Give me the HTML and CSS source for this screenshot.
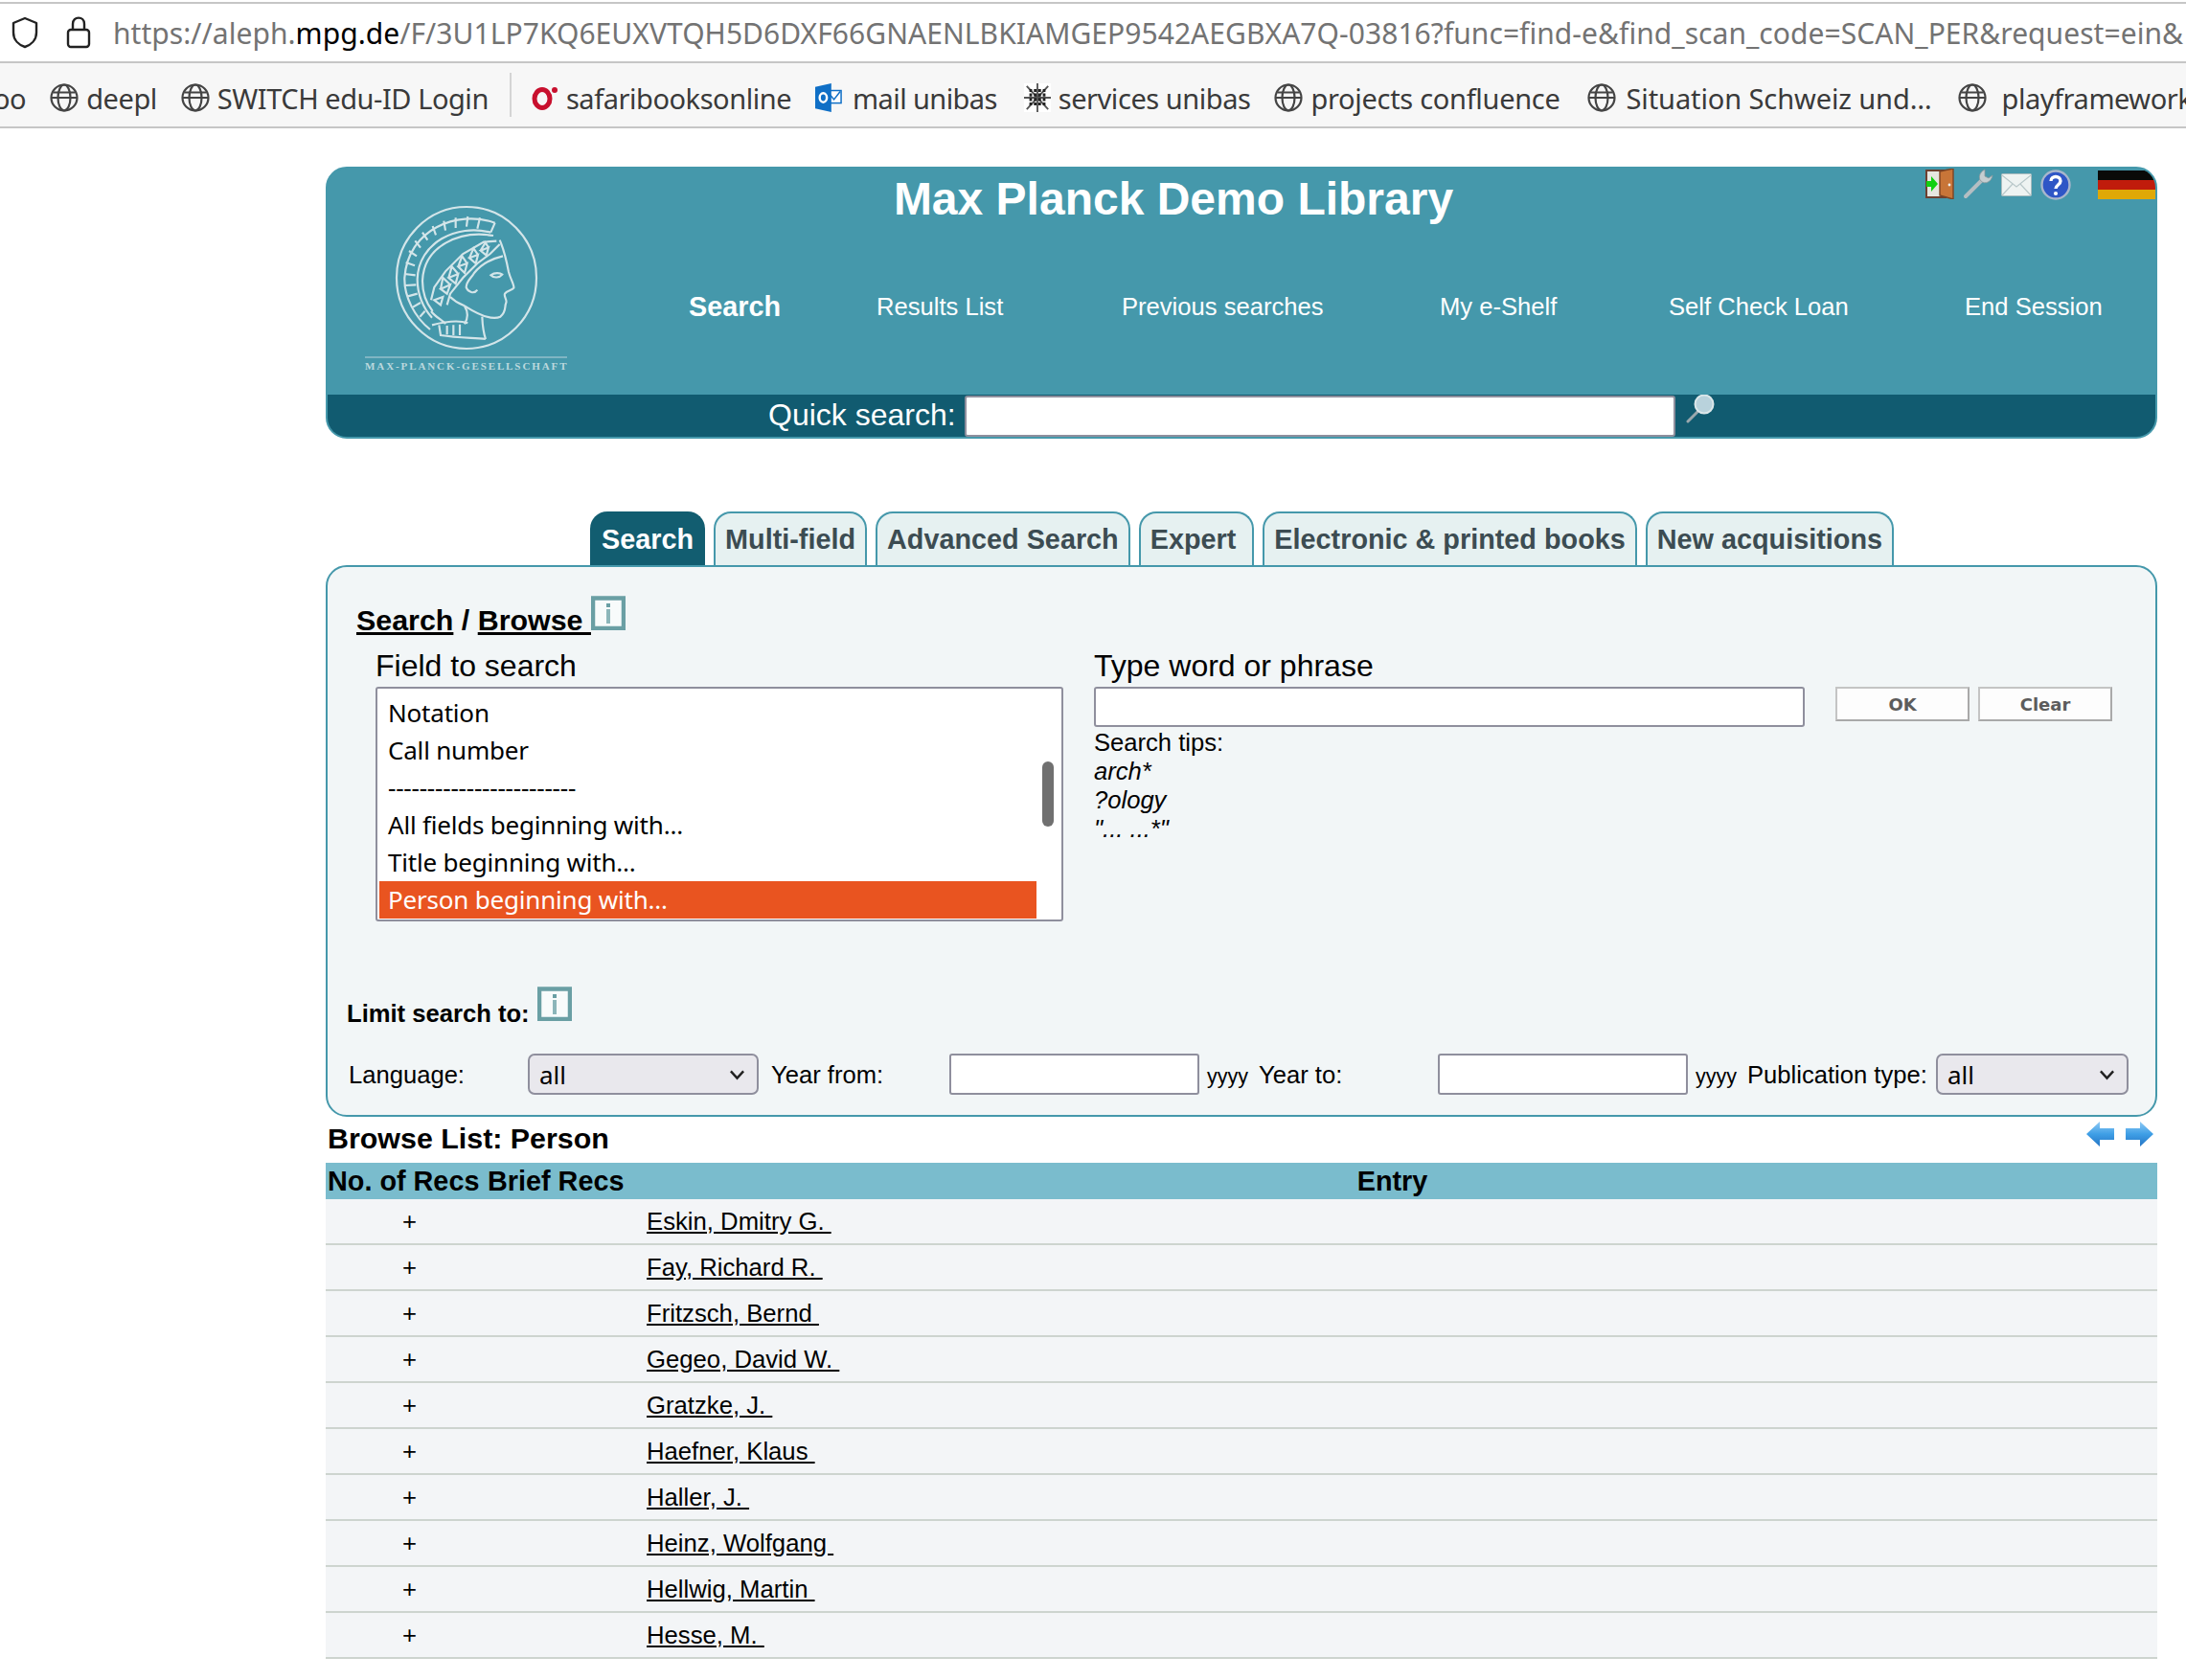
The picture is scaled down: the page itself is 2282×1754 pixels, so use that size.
FILE: index.html
```html
<!DOCTYPE html>
<html lang="en">
<head>
    <meta charset="UTF-8">
    <meta name="viewport" content="width=device-width, initial-scale=1.0">
    <title>Max Planck Demo Library</title>
    <link rel="stylesheet" href="styles.css">
</head>
<body>
    <div class="url-bar">
        <svg class="shield" viewBox="0 0 28 34"><path d="M14 2 L26 7 V17 C26 25 20 30 14 32 C8 30 2 25 2 17 V7 Z" fill="none" stroke="#222" stroke-width="2.4" stroke-linejoin="round"/></svg>
        <svg class="lock" viewBox="0 0 26 34"><rect x="2" y="14" width="22" height="18" rx="3" fill="none" stroke="#222" stroke-width="2.4"/><path d="M7 14 V8 C7 -0.5 19 -0.5 19 8 V14" fill="none" stroke="#222" stroke-width="2.4"/></svg>
        <span class="url">https://aleph.<b>mpg.de</b>/F/3U1LP7KQ6EUXVTQH5D6DXF66GNAENLBKIAMGEP9542AEGBXA7Q-03816?func=find-e&amp;find_scan_code=SCAN_PER&amp;request=ein&amp;</span>
    </div>
    <div class="bookmarks">
        <span class="bm-text bm-cut">oo</span>
        <span class="bm"><svg class="globe" viewBox="0 0 30 30"><use href="#globe"/></svg>deepl</span>
        <span class="bm"><svg class="globe" viewBox="0 0 30 30"><use href="#globe"/></svg>SWITCH edu-ID Login</span>
        <span class="bm-sep"></span>
        <span class="bm"><svg class="fav" viewBox="0 0 28 28"><ellipse cx="11" cy="15" rx="8" ry="9.5" fill="none" stroke="#c8102e" stroke-width="5"/><circle cx="24" cy="6" r="3" fill="#c8102e"/></svg>safaribooksonline</span>
        <span class="bm bm-mail"><svg class="fav" viewBox="0 0 30 32"><rect x="14" y="8" width="15" height="14" fill="#fff" stroke="#0f6fc6" stroke-width="1.6"/><path d="M16 12 L21 18 L28 9" fill="none" stroke="#0f6fc6" stroke-width="1.6"/><path d="M0 4 L18 0 V32 L0 28 Z" fill="#0f6fc6"/><ellipse cx="9" cy="16" rx="4" ry="5" fill="none" stroke="#fff" stroke-width="2.6"/></svg>mail unibas</span>
        <span class="bm bm-srv"><svg class="fav" viewBox="0 0 30 32"><rect width="30" height="32" fill="#fff"/><g stroke="#555" stroke-width="2"><path d="M15 0 V32 M0 16 H30 M3 3 L27 29 M27 3 L3 29"/></g><g stroke="#222" stroke-width="3.4" stroke-dasharray="3 2"><path d="M6 8 H24 M6 13 H24 M6 18 H24 M6 23 H24"/></g></svg>services unibas</span>
        <span class="bm bm-prj"><svg class="globe" viewBox="0 0 30 30"><use href="#globe"/></svg>projects confluence</span>
        <span class="bm bm-sit"><svg class="globe" viewBox="0 0 30 30"><use href="#globe"/></svg>Situation Schweiz und…</span>
        <span class="bm bm-last"><svg class="globe" viewBox="0 0 30 30"><use href="#globe"/></svg>playframework</span>
        <svg class="defs" width="0" height="0"><defs><g id="globe" fill="none" stroke="#444" stroke-width="2.2"><circle cx="15" cy="15" r="13.5"/><ellipse cx="15" cy="15" rx="6.5" ry="13.5"/><path d="M1.5 15 H28.5 M3.5 9.5 H26.5"/></g></defs></svg>
    </div>

    <div class="page">
        <div class="header">
            <div class="header-top">
                <div class="logo">
                    <svg class="logo-mark" viewBox="0 0 495 495">
                        <g fill="none" stroke="#d3e5e9" stroke-width="6.5">
                            <ellipse cx="246" cy="240" rx="219" ry="222"/>
                            <path d="M335 68 C215 25 62 90 52 240 C50 300 85 365 132 402"/>
                            <path d="M322 98 C215 70 95 130 92 245 C92 290 110 335 138 365"/>
                            <path d="M330 108 C225 90 112 140 108 250 C108 285 120 320 140 345"/>
                            <path d="M335 68 L322 98 M288 52 L280 86 M250 48 L246 80 M212 52 L212 84 M175 62 L180 92 M140 78 L150 106 M108 98 L124 122 M85 124 L102 146 M66 156 L90 172 M56 192 L84 202 M52 228 L86 232 M54 264 L88 262 M62 298 L92 290 M78 332 L102 318 M100 362 L116 344"/>
                            <path d="M340 125 L300 128 L235 165 L180 220 L145 270 L135 310 M350 135 L320 165 L280 195 L235 240 L195 290 L185 325"/>
                            <path d="M165 275 L195 262 L185 290 Z M165 275 L172 240 L195 262 M190 240 L220 228 L212 258 Z M190 240 L200 205 L220 228 M220 205 L248 195 L240 225 Z M220 205 L232 172 L248 195 M255 178 L282 168 L275 195 Z M255 178 L268 148 L282 168 M290 155 L315 145 L308 170 Z M290 155 L305 130 L315 145 M145 310 L172 300 L165 325 Z"/>
                            <path d="M350 122 C358 140 372 190 378 222 C384 245 396 262 394 272 C388 280 372 280 366 290 C362 298 374 310 370 318 C364 332 372 345 352 362 C330 372 290 360 240 328"/>
                            <path d="M360 172 C325 180 290 200 270 225 C262 240 245 250 245 270 C250 285 270 292 280 278"/>
                            <path d="M322 232 C335 222 352 225 358 230 C350 240 332 242 322 232 Z"/>
                            <path d="M240 328 C250 345 252 365 240 385 M295 362 C296 385 298 410 306 432 M138 388 C200 372 230 375 250 382 M160 388 L165 420 C215 428 260 428 306 432 M185 390 V418 M205 388 V420 M225 386 V420"/>
                            <path d="M135 345 C150 365 175 375 180 385 M195 300 C215 320 235 325 240 328"/>
                        </g>
                    </svg>
                    <div class="logo-text">MAX-PLANCK-GESELLSCHAFT</div>
                </div>
                <div class="header-main">
                    <h1 class="title">Max Planck Demo Library</h1>
                    <div class="nav">
                        <a class="nav-active">Search</a>
                        <a>Results List</a>
                        <a>Previous searches</a>
                        <a>My e-Shelf</a>
                        <a>Self Check Loan</a>
                        <a>End Session</a>
                    </div>
                </div>
            </div>
            <div class="header-icons">
                <svg class="ic-door" viewBox="0 0 30 32"><rect x="1" y="2" width="20" height="28" fill="#e6e6e0" stroke="#6d4030" stroke-width="2"/><path d="M15 3 L29 0 V32 L15 28 Z" fill="#c87538" stroke="#7b4424" stroke-width="1.4"/><circle cx="25" cy="17" r="1.4" fill="#eee"/><path d="M1 13 H6 V8 L13 16 L6 24 V19 H1 Z" fill="#10d010"/></svg>
                <svg class="ic-wrench" viewBox="0 0 32 32"><path d="M3 29 L20 12" stroke="#b4bec2" stroke-width="4" stroke-linecap="round"/><path d="M23 1 C17 4 16 10 19 13 C23 17 30 14 31 7 L27 10 L23 8 Z" fill="#c5ced1" stroke="#8c989c" stroke-width="0.8"/></svg>
                <svg class="ic-mail" viewBox="0 0 32 24"><rect x="0.5" y="0.5" width="31" height="23" rx="1" fill="#eef3f2" stroke="#a9bcbf"/><path d="M1 2 L16 14 L31 2 M1 23 L12 11 M31 23 L20 11" fill="none" stroke="#b9c8ca" stroke-width="1.2"/></svg>
                <svg class="ic-help" viewBox="0 0 32 32"><circle cx="16" cy="16" r="14.5" fill="#2f56c6" stroke="#a8b6cc" stroke-width="2.4"/><path d="M11 12 C11 6 21 6 21 12 C21 16 16 16 16 20" fill="none" stroke="#fff" stroke-width="3.4"/><circle cx="16" cy="25" r="2.1" fill="#fff"/></svg>
                <div class="ic-flag"><span class="flag-black"></span><span class="flag-red"></span><span class="flag-gold"></span></div>
            </div>
            <div class="quick-bar">
                <label class="quick-label">Quick search:</label>
                <input class="quick-input" type="text">
                <svg class="quick-go" viewBox="0 0 30 32"><path d="M2 28 L14 16" stroke="#9aa8ad" stroke-width="3" stroke-linecap="round"/><circle cx="19" cy="10" r="9.5" fill="#b9d2dc" stroke="#dce7ea" stroke-width="2"/></svg>
            </div>
        </div>

        <div class="tabs">
            <a class="tab tab-active">Search</a>
            <a class="tab">Multi-field</a>
            <a class="tab">Advanced Search</a>
            <a class="tab tab-expert">Expert</a>
            <a class="tab">Electronic &amp; printed books</a>
            <a class="tab">New acquisitions</a>
        </div>

        <div class="panel">
            <div class="panel-head">
                <span class="panel-title"><a>Search</a> / <a>Browse </a></span>
                <svg class="info" viewBox="0 0 36 36"><rect x="2" y="2.5" width="32" height="31.5" fill="#f8fbfb" stroke="#6a9fa4" stroke-width="4.5"/><rect x="16" y="8" width="4" height="4" fill="#6a9fa4"/><rect x="16" y="14" width="4" height="15" fill="#8cb6ba"/></svg>
            </div>
            <div class="search-cols">
                <div class="field-col">
                    <div class="col-label">Field to search</div>
                    <div class="listbox">
                        <div class="opt">Notation</div>
                        <div class="opt">Call number</div>
                        <div class="opt">------------------------</div>
                        <div class="opt">All fields beginning with...</div>
                        <div class="opt">Title beginning with...</div>
                        <div class="opt opt-sel">Person beginning with...</div>
                        <div class="list-thumb"></div>
                    </div>
                </div>
                <div class="word-col">
                    <div class="col-label">Type word or phrase</div>
                    <div class="word-row">
                        <input class="word-input" type="text">
                        <button class="btn btn-ok">OK</button>
                        <button class="btn">Clear</button>
                    </div>
                    <div class="tips">
                        Search tips:<br>
                        <i>arch*</i><br>
                        <i>?ology</i><br>
                        <i>"... ...*"</i>
                    </div>
                </div>
            </div>
            <div class="limit-row">
                <span class="limit-label">Limit search to:</span>
                <svg class="info" viewBox="0 0 36 36"><rect x="2" y="2.5" width="32" height="31.5" fill="#f8fbfb" stroke="#6a9fa4" stroke-width="4.5"/><rect x="16" y="8" width="4" height="4" fill="#6a9fa4"/><rect x="16" y="14" width="4" height="15" fill="#8cb6ba"/></svg>
            </div>
            <div class="filter-row">
                <span class="f-lang">Language:</span>
                <div class="select sel-lang"><span>all</span><svg viewBox="0 0 14 10"><path d="M1.5 2 L7 8 L12.5 2" fill="none" stroke="#222" stroke-width="2"/></svg></div>
                <span class="f-from">Year from:</span>
                <input class="year-input" type="text">
                <span class="yyyy">yyyy</span>
                <span class="f-to">Year to:</span>
                <input class="year-input" type="text">
                <span class="yyyy">yyyy</span>
                <span class="f-pub">Publication type:</span>
                <div class="select sel-pub"><span>all</span><svg viewBox="0 0 14 10"><path d="M1.5 2 L7 8 L12.5 2" fill="none" stroke="#222" stroke-width="2"/></svg></div>
            </div>
        </div>

        <div class="browse-bar">
            <span class="browse-title">Browse List: Person</span>
            <div class="arrows">
                <svg viewBox="0 0 29 26"><defs><linearGradient id="arrow-fill" x1="0" y1="0" x2="0" y2="1"><stop offset="0" stop-color="#8fcaf5"/><stop offset="0.5" stop-color="#3f9fe6"/><stop offset="1" stop-color="#2474c4"/></linearGradient></defs><path d="M0 13 L14 0 V7 H29 V19 H14 V26 Z" fill="url(#arrow-fill)"/></svg>
                <svg viewBox="0 0 29 26"><path d="M29 13 L15 0 V7 H0 V19 H15 V26 Z" fill="url(#arrow-fill)"/></svg>
            </div>
        </div>

        <table class="browse-table">
            <thead>
                <tr><th class="col-recs">No. of Recs</th><th class="col-brief">Brief Recs</th><th class="col-entry">Entry</th></tr>
            </thead>
            <tbody>
                <tr><td class="plus">+</td><td></td><td><a>Eskin, Dmitry G. </a></td></tr>
                <tr><td class="plus">+</td><td></td><td><a>Fay, Richard R. </a></td></tr>
                <tr><td class="plus">+</td><td></td><td><a>Fritzsch, Bernd </a></td></tr>
                <tr><td class="plus">+</td><td></td><td><a>Gegeo, David W. </a></td></tr>
                <tr><td class="plus">+</td><td></td><td><a>Gratzke, J. </a></td></tr>
                <tr><td class="plus">+</td><td></td><td><a>Haefner, Klaus </a></td></tr>
                <tr><td class="plus">+</td><td></td><td><a>Haller, J. </a></td></tr>
                <tr><td class="plus">+</td><td></td><td><a>Heinz, Wolfgang </a></td></tr>
                <tr><td class="plus">+</td><td></td><td><a>Hellwig, Martin </a></td></tr>
                <tr><td class="plus">+</td><td></td><td><a>Hesse, M. </a></td></tr>
            </tbody>
        </table>
    </div>
</body>
</html>
```
FILE: styles.css
```css
html, body {
    margin: 0;
    background: #fff;
    overflow: hidden;
}

body {
    font-family: "Liberation Sans", Arial, sans-serif;
    color: #000;
    width: 2282px;
    height: 1754px;
}

/* browser chrome */
.url-bar {
    margin-top: 2px;
    height: 60px;
    border-top: 2px solid #c6c6c6;
    border-bottom: 2px solid #c6c6c6;
    display: flex;
    align-items: center;
    white-space: nowrap;
    overflow: hidden;
}

.shield {
    width: 28px;
    height: 34px;
    margin-left: 12px;
    flex: none;
}

.lock {
    width: 26px;
    height: 34px;
    margin-left: 29px;
    flex: none;
}

.url {
    margin-left: 23px;
    font-family: "Noto Sans", sans-serif;
    font-size: 30px;
    letter-spacing: 0.05px;
    color: #737373;
}

.url b {
    font-weight: normal;
    color: #000;
}

.bookmarks {
    height: 60px;
    padding-top: 6px;
    background: #f7f7f7;
    border-bottom: 2px solid #c6c6c6;
    display: flex;
    align-items: center;
    gap: 25px;
    white-space: nowrap;
    overflow: hidden;
    font-family: "Noto Sans", sans-serif;
    font-size: 29px;
    letter-spacing: -0.45px;
    color: #3a3a3a;
}

.bm-cut {
    margin-left: -7px;
}

.bm {
    display: flex;
    align-items: center;
    gap: 8px;
    flex: none;
}

.bm-mail {
    gap: 11px;
    letter-spacing: -0.6px;
}

.bm-srv {
    margin-left: 3px;
}

.bm-prj {
    letter-spacing: -0.3px;
}

.bm-sit {
    margin-left: 3px;
    gap: 11px;
    letter-spacing: -0.1px;
}

.bm-last {
    margin-left: 2px;
    gap: 16px;
}

.bm-sep {
    flex: none;
    width: 2px;
    height: 46px;
    margin: -6px -4px 0 -3px;
    background: #d4d4d4;
}

.globe {
    width: 30px;
    height: 30px;
    flex: none;
}

.fav {
    width: 28px;
    height: 32px;
    flex: none;
}

.defs {
    position: absolute;
}

/* page */
.page {
    margin: 40px 30px 0 340px;
}

.header {
    position: relative;
    height: 280px;
    border: 2px solid #4598ab;
    border-radius: 22px;
    background: #4598ab;
    overflow: hidden;
    color: #fff;
}

.header-top {
    height: 236px;
    display: flex;
}

.logo {
    width: 377px;
    flex: none;
}

.logo-mark {
    display: block;
    width: 165px;
    height: 165px;
    margin: 34px 0 0 63px;
}

.logo-text {
    width: 211px;
    margin: -3px 0 0 39px;
    border-top: 2px solid #7fb5c3;
    padding-top: 2px;
    font-family: "Liberation Serif", serif;
    font-weight: bold;
    font-size: 11px;
    line-height: 13px;
    letter-spacing: 1.9px;
    white-space: nowrap;
    color: #bcd8de;
}

.title {
    width: 1012px;
    margin: 4px 0 0;
    font-size: 48px;
    line-height: 56px;
    text-align: center;
}

.nav {
    margin-top: 69px;
    display: grid;
    grid-template-columns: 196px 256px 332px 239px 309px auto;
    align-items: center;
    font-size: 25.6px;
    line-height: 30px;
}

.nav-active {
    font-weight: bold;
    font-size: 28.8px;
}

.header-icons {
    position: absolute;
    top: 0;
    right: 0;
    height: 34px;
    display: flex;
    align-items: flex-start;
}

.ic-door {
    width: 30px;
    height: 32px;
    margin-right: 9px;
}

.ic-wrench {
    width: 32px;
    height: 32px;
    margin-right: 8px;
}

.ic-mail {
    width: 32px;
    height: 24px;
    margin: 5px 9px 0 0;
}

.ic-help {
    width: 32px;
    height: 32px;
    margin: 1px 28px 0 0;
}

.ic-flag {
    width: 60px;
    height: 30px;
    margin-top: 2px;
    display: flex;
    flex-direction: column;
    border-radius: 0 6px 0 0;
    overflow: hidden;
}

.ic-flag span {
    flex: 1;
}

.flag-black {
    background: #0a0a08;
}

.flag-red {
    background: #c01c0c;
}

.flag-gold {
    background: #e0a806;
}

.quick-bar {
    height: 44px;
    background: #115b70;
    display: flex;
    align-items: flex-start;
    padding-left: 460px;
}

.quick-label {
    font-size: 32px;
    line-height: 43px;
    width: 205px;
}

.quick-input {
    width: 742px;
    height: 43px;
    box-sizing: border-box;
    margin: 1px 0 0;
    border: 2px solid #8f8f9d;
    border-radius: 3px;
    background: #fff;
}

.quick-go {
    width: 30px;
    height: 32px;
    margin-left: 11px;
}

/* tabs */
.tabs {
    margin-top: 76px;
    padding-left: 276px;
    display: flex;
    gap: 9px;
    height: 56px;
}

.tab {
    box-sizing: border-box;
    height: 58px;
    padding: 0 10px;
    border: 2px solid #4598ab;
    border-bottom: none;
    border-radius: 18px 18px 0 0;
    background: #e6f1f1;
    color: #3c4c52;
    font-size: 28.8px;
    font-weight: bold;
    line-height: 54px;
    white-space: nowrap;
}

.tab-expert {
    padding-right: 17px;
}

.tab-active {
    background: #125d70;
    border-color: #125d70;
    color: #fff;
}

/* search panel */
.panel {
    position: relative;
    box-sizing: border-box;
    height: 576px;
    border: 2px solid #4598ab;
    border-radius: 22px;
    background: #f2f6f7;
}

.panel-head {
    display: flex;
    align-items: flex-end;
    margin: 31px 0 0 30px;
    height: 43px;
    font-size: 30.4px;
    line-height: 36px;
    font-weight: bold;
}

.panel-title {
    white-space: pre;
    margin-bottom: 1px;
}

.panel-title a {
    text-decoration: underline;
}

.info {
    width: 36px;
    height: 36px;
    flex: none;
}

.panel-head .info {
    align-self: flex-start;
    margin-top: -1px;
}

.search-cols {
    display: flex;
    margin-left: 50px;
    gap: 32px;
}

.col-label {
    margin: 11px 0 4px;
    font-size: 32px;
    line-height: 36px;
}

.field-col {
    width: 718px;
}

.listbox {
    position: relative;
    box-sizing: border-box;
    height: 245px;
    padding: 6px 2px 0 2px;
    border: 2px solid #8f8f9d;
    border-radius: 3px;
    background: #fff;
    font-family: "Noto Sans", sans-serif;
    font-size: 26px;
    letter-spacing: -0.2px;
}

.opt {
    height: 39px;
    line-height: 38px;
    width: 686px;
    padding-left: 9px;
    box-sizing: border-box;
}

.opt-sel {
    background: #e95420;
    color: #fff;
}

.list-thumb {
    position: absolute;
    top: 76px;
    right: 8px;
    width: 12px;
    height: 68px;
    border-radius: 6px;
    background: #707070;
}

.word-row {
    display: flex;
    align-items: flex-start;
}

.word-input {
    width: 742px;
    height: 42px;
    box-sizing: border-box;
    margin: 0 32px 0 0;
    border: 2px solid #8f8f9d;
    border-radius: 3px;
    background: #fff;
}

.btn {
    width: 140px;
    height: 36px;
    box-sizing: border-box;
    margin: 0 0 0 9px;
    padding: 0;
    border: 2px solid #a9a9a9;
    border-top-color: #c4c4c4;
    border-left-color: #c4c4c4;
    background: #fdfdfd;
    color: #5c5c5c;
    font-family: "DejaVu Sans", sans-serif;
    font-weight: bold;
    font-size: 18px;
}

.btn-ok {
    margin-left: 0;
}

.tips {
    margin-top: 1px;
    font-size: 25.6px;
    line-height: 30px;
}

.limit-row {
    display: flex;
    align-items: flex-start;
    margin: 68px 0 0 20px;
    height: 42px;
    gap: 8px;
}

.limit-label {
    margin-top: 13px;
    font-size: 25.6px;
    line-height: 30px;
    font-weight: bold;
}

.filter-row {
    display: flex;
    align-items: center;
    margin: 28px 0 0 22px;
    height: 43px;
    font-size: 25.6px;
    white-space: nowrap;
}

.filter-row > span {
    padding-top: 2px;
}

.f-lang {
    width: 187px;
    flex: none;
}

.f-from {
    width: 186px;
    margin-left: 13px;
    flex: none;
}

.f-to {
    width: 187px;
    flex: none;
}

.f-pub {
    width: 197px;
    flex: none;
}

.select {
    box-sizing: border-box;
    height: 43px;
    display: flex;
    align-items: center;
    justify-content: space-between;
    padding: 0 12px 0 10px;
    border: 2px solid #8f8f9d;
    border-radius: 7px;
    background: #e9e8ed;
    font-family: "Noto Sans", sans-serif;
    font-size: 26px;
    flex: none;
}

.select svg {
    width: 17px;
    height: 12px;
}

.sel-lang {
    width: 241px;
}

.sel-pub {
    width: 201px;
}

.year-input {
    width: 261px;
    height: 43px;
    box-sizing: border-box;
    margin: 0;
    border: 2px solid #8f8f9d;
    border-radius: 3px;
    background: #fff;
    flex: none;
}

.yyyy {
    width: 54px;
    margin-left: 8px;
    padding-top: 6px !important;
    font-size: 21.5px;
    flex: none;
}

/* browse list */
.browse-bar {
    height: 48px;
    display: flex;
    justify-content: space-between;
    align-items: flex-start;
}

.browse-title {
    padding: 5px 0 0 2px;
    font-size: 30.4px;
    line-height: 34px;
    font-weight: bold;
}

.arrows {
    display: flex;
    gap: 12px;
    margin: 5px 4px 0 0;
}

.arrows svg {
    width: 29px;
    height: 26px;
}

.browse-table {
    width: 100%;
    table-layout: fixed;
    border-collapse: collapse;
}

.browse-table th {
    height: 38px;
    padding: 0;
    background: #7abccd;
    font-size: 28.8px;
    line-height: 34px;
    font-weight: bold;
    text-align: left;
    white-space: nowrap;
}

.col-recs {
    width: 169px;
    padding-left: 2px !important;
    box-sizing: border-box;
}

.col-brief {
    width: 164px;
    padding-left: 0 !important;
    box-sizing: border-box;
}

.col-entry {
    text-align: center !important;
    padding-right: 18px !important;
}

.browse-table td {
    height: 46px;
    padding: 0 0 0 2px;
    background: #f3f5f7;
    border-bottom: 2px solid #cdd4cf;
    font-size: 25.7px;
}

.browse-table td.plus {
    padding-left: 80px;
}

.browse-table a {
    color: #000;
    text-decoration: underline;
    white-space: pre;
}
```
